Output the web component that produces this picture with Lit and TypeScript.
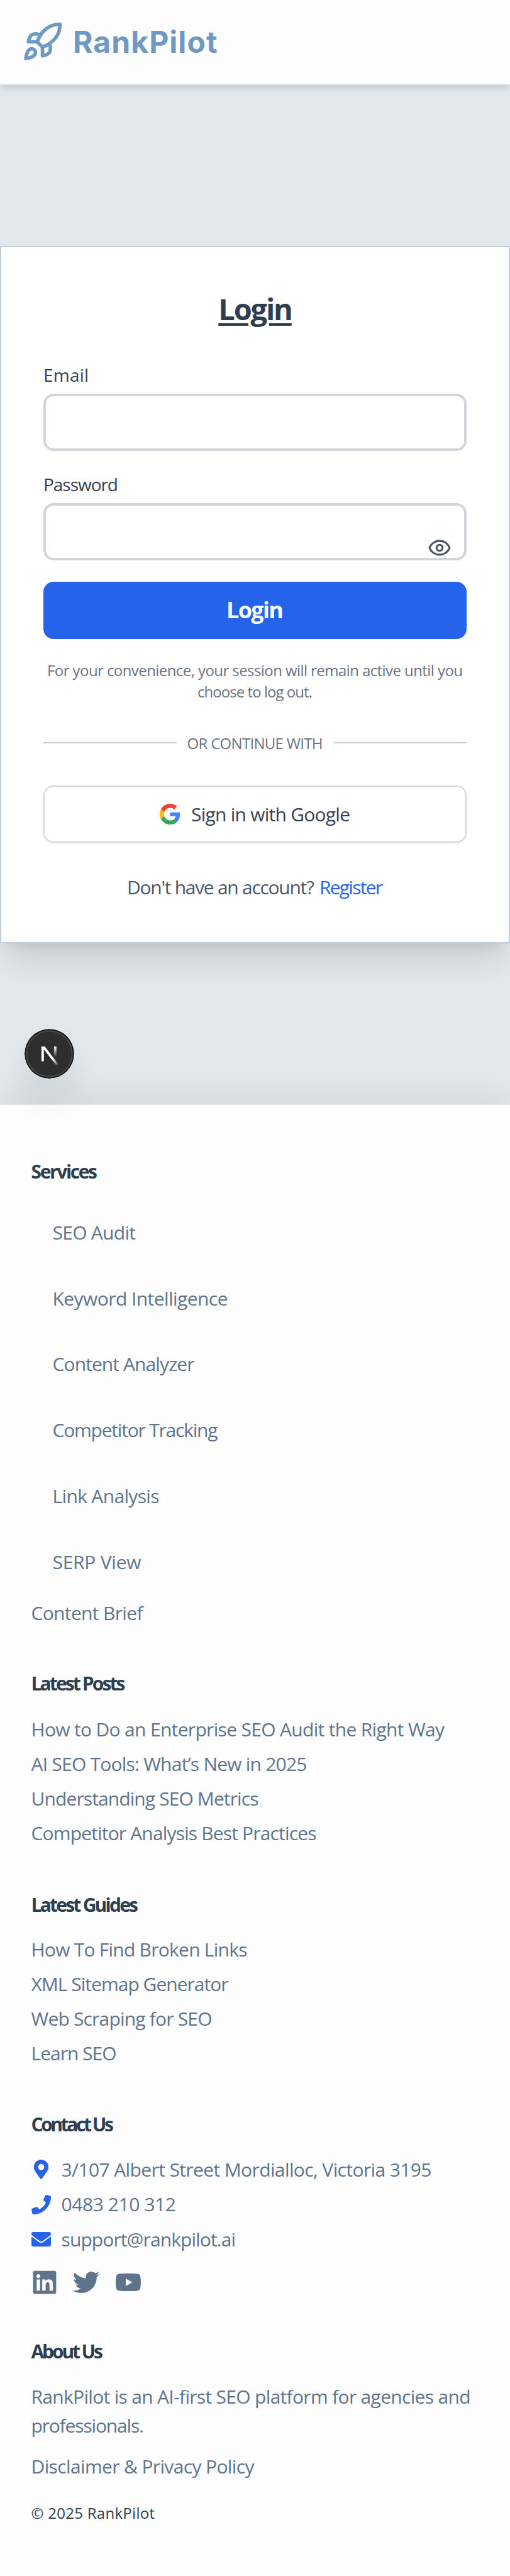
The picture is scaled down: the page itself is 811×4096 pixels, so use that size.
import { LitElement, html, css } from "lit";
import { customElement, property } from "lit/decorators.js";

/* A single line of text tracked out (or in) so that it runs to a set measure. */
@customElement("set-line")
class SetLine extends LitElement {
  @property({ type: String }) text = "";
  @property({ type: Number }) measure = 0;

  static styles = css`
    :host { display: inline-block; white-space: pre; }
    .run { display: inline-block; font-kerning: normal; }
  `;

  render() {
    return html`<span class="run">${this.text}</span>`;
  }

  updated() {
    const run = this.renderRoot.querySelector(".run") as HTMLElement;
    run.style.letterSpacing = "0px";
    const natural = run.getBoundingClientRect().width;
    const gaps = Math.max(1, this.text.length - 1);
    const tracking = (this.measure - natural) / gaps;
    run.style.letterSpacing = `${tracking.toFixed(3)}px`;
    run.style.marginRight = `${(-tracking).toFixed(3)}px`;
  }
}

type Entry = [string, number];
const line = ([text, measure]: Entry) =>
  html`<set-line .text=${text} .measure=${measure}></set-line>`;

const services: Entry[] = [
  ["SEO Audit", 132.5], ["Keyword Intelligence", 279], ["Content Analyzer", 226],
  ["Competitor Tracking", 263], ["Link Analysis", 170], ["SERP View", 141],
];
const posts: Entry[] = [
  ["How to Do an Enterprise SEO Audit the Right Way", 657.5],
  ["AI SEO Tools: What’s New in 2025", 439],
  ["Understanding SEO Metrics", 362],
  ["Competitor Analysis Best Practices", 454],
];
const guides: Entry[] = [
  ["How To Find Broken Links", 344], ["XML Sitemap Generator", 314],
  ["Web Scraping for SEO", 288], ["Learn SEO", 136],
];

@customElement("app-root")
class AppRoot extends LitElement {
  static styles = css`
    :host {
      display: flex; flex-direction: column; width: 811px; height: 4096px; overflow: hidden;
      font-family: "Open Sans", "Noto Sans", sans-serif;
      background: #e2e8ec; font-size: 30px; color: #5f748c;
    }
    * { box-sizing: border-box; }
    svg { display: block; flex: none; }
    .top {
      height: 135.3px; flex: none; background: #fdfdfd; border-bottom: 2.3px solid #e2e7ea;
      display: flex; align-items: center; padding-left: 33.5px; color: #6f99c3;
      box-shadow: 0 8px 12px -2px rgba(0,0,0,.1), 0 4px 8px -4px rgba(0,0,0,.1);
    }
    .rocket { width: 67px; height: 67px; }
    .brand { margin-left: 15.5px; font: 700 48px/60px "Inter", sans-serif; }
    .main { height: 1619.4px; flex: none; padding-top: 255.7px; }
    .card {
      height: 1109.5px; background: #fff; border: 2px solid #c2cdd9; padding: 67.6px 67px 0;
      display: flex; flex-direction: column;
      box-shadow: 0 40px 50px -10px rgba(0,0,0,.1), 0 16px 20px -12px rgba(0,0,0,.1);
    }
    .title {
      align-self: center; font-weight: 700; font-size: 47px; line-height: 60px; color: #2e3e50;
      text-decoration: underline; text-decoration-thickness: 4px; text-underline-offset: 5px;
      height: 60px; margin-bottom: 55px; letter-spacing: -2.2px;
    }
    .label { font-size: 28px; line-height: 40px; height: 40px; color: #374151; margin-bottom: 10.2px; }
    .field {
      height: 91.4px; border: 4px solid #d1d5db; border-radius: 16px; margin-bottom: 32.4px;
      display: flex; justify-content: flex-end; align-items: flex-end; padding: 0 20px 0 0; color: #4b5563;
    }
    .field.last { margin-bottom: 33.4px; }
    .eye { width: 38px; height: 38px; margin-bottom: -2.5px; }
    .submit {
      height: 91.7px; border-radius: 16px; background: #2563eb; color: #fff; font-weight: 700;
      font-size: 36px; display: flex; align-items: center; justify-content: center;
      line-height: 50px;
    }
    .note {
      margin-top: 33px; font-size: 24px; line-height: 33.6px; color: #6b7280;
      display: flex; flex-direction: column; align-items: center;
    }
    .note set-line { height: 33.6px; }
    .or { margin-top: 48.2px; height: 33.2px; display: flex; align-items: center; gap: 17px; font-size: 24px; line-height: 33.2px; color: #6b7280; }
    .rule { flex: 1; height: 2.2px; background: #c2cdd9; }
    .google {
      margin-top: 51.2px; height: 91.3px; border: 2px solid #d1d5db; border-radius: 16px;
      display: flex; align-items: center; justify-content: center; gap: 17px; color: #374151; line-height: 44px;
      box-shadow: 0 2px 4px rgba(0,0,0,.05);
    }
    .g { width: 33px; height: 33px; }
    .join { margin-top: 49px; height: 44px; line-height: 44px; display: flex; justify-content: center; gap: 8px; color: #4b5563; }
    .link { color: #2563eb; }
    .badge {
      position: absolute; left: 39.3px; top: 1635.6px; width: 79px; height: 79px; border-radius: 50%;
      box-shadow: 0 32px 64px -16px rgba(0,0,0,.24);
    }
    .foot {
      flex: 1; background: #fdfdfd; border-top: 2.3px solid #e2e6ea; padding: 84px 0 0 49.5px;
      box-shadow: 0 -16px 48px rgba(0,0,0,.065);
      display: flex; flex-direction: column; line-height: 44px;
    }
    .foot > * { flex: none; }
    .head { height: 44px; font-weight: 700; color: #2c3e50; }
    .services { margin-top: 23.1px; padding-left: 34px; line-height: 104.8px; }
    .row { display: flex; align-items: center; }
    .services .row { height: 104.8px; }
    .brief { margin-top: 6.4px; height: 44px; }
    .h-posts { margin-top: 68.5px; }
    .list { line-height: 55px; }
    .list .row { height: 55px; }
    .posts { margin-top: 22.9px; }
    .h-guides { margin-top: 64.5px; }
    .guides { margin-top: 21.2px; }
    .h-contact { margin-top: 64.1px; }
    .contact { margin-top: 22px; }
    .contact .row { height: 55.3px; gap: 17px; }
    .contact .phone set-line { line-height: 53px; height: 55px; }
    .ic { width: 31px; height: 31px; color: #2563eb; }
    .social { margin-top: 20px; height: 42px; display: flex; gap: 24.5px; }
    .social svg { height: 42px; width: 42px; }
    .h-about { margin-top: 67px; }
    .about { margin-top: 26.7px; line-height: 46.7px; display: flex; flex-direction: column; align-items: flex-start; }
    .about set-line { height: 46.7px; }
    .legal { margin-top: 18.6px; height: 44px; }
    .copy { margin-top: 33.9px; height: 36px; line-height: 36px; font-size: 24px; color: #2c3e50; }
  `;

  render() {
    return html`
      <header class="top">
        <svg class="rocket" viewBox="0 0 24 24" fill="none" stroke="currentColor" stroke-width="2" stroke-linecap="round" stroke-linejoin="round">
          <path d="M4.5 16.5c-1.5 1.26-2 5-2 5s3.74-.5 5-2c.71-.84.7-2.13-.09-2.91a2.18 2.18 0 0 0-2.91-.09z"/>
          <path d="m12 15-3-3a22 22 0 0 1 2-3.95A12.88 12.88 0 0 1 22 2c0 2.72-.78 7.5-6 11a22.35 22.35 0 0 1-4 2z"/>
          <path d="M9 12H4s.55-3.03 2-4c1.62-1.08 5 0 5 0"/>
          <path d="M12 15v5s3.03-.55 4-2c1.08-1.62 0-5 0-5"/>
        </svg>
        <div class="brand">${line(["RankPilot", 229.5])}</div>
      </header>

      <main class="main">
        <section class="card">
          <div class="title">Login</div>
          <div class="label">${line(["Email", 72])}</div>
          <div class="field"></div>
          <div class="label">${line(["Password", 119])}</div>
          <div class="field last">
            <svg class="eye" viewBox="0 0 24 24" fill="none" stroke="currentColor" stroke-width="2" stroke-linecap="round" stroke-linejoin="round">
              <path d="M2.062 12.348a1 1 0 0 1 0-.696 10.75 10.75 0 0 1 19.876 0 1 1 0 0 1 0 .696 10.75 10.75 0 0 1-19.876 0"/>
              <circle cx="12" cy="12" r="3"/>
            </svg>
          </div>
          <div class="submit">${line(["Login", 91])}</div>
          <div class="note">
            ${line(["For your convenience, your session will remain active until you", 661])}
            ${line(["choose to log out.", 183])}
          </div>
          <div class="or"><span class="rule"></span>${line(["OR CONTINUE WITH", 216])}<span class="rule"></span></div>
          <div class="google">
            <svg class="g" viewBox="0 0 48 48">
              <path fill="#EA4335" d="M24 9.5c3.54 0 6.71 1.22 9.21 3.6l6.85-6.85C35.9 2.38 30.47 0 24 0 14.62 0 6.51 5.38 2.56 13.22l7.98 6.19C12.43 13.72 17.74 9.5 24 9.5z"/>
              <path fill="#4285F4" d="M46.98 24.55c0-1.57-.15-3.09-.38-4.55H24v9.02h12.94c-.58 2.96-2.26 5.48-4.78 7.18l7.73 6c4.51-4.18 7.09-10.36 7.09-17.65z"/>
              <path fill="#FBBC05" d="M10.53 28.59c-.48-1.45-.76-2.99-.76-4.59s.27-3.14.76-4.59l-7.98-6.19C.92 16.46 0 20.12 0 24c0 3.88.92 7.54 2.56 10.78l7.97-6.19z"/>
              <path fill="#34A853" d="M24 48c6.48 0 11.93-2.13 15.89-5.81l-7.73-6c-2.15 1.45-4.92 2.3-8.16 2.3-6.26 0-11.57-4.22-13.47-9.91l-7.98 6.19C6.51 42.62 14.62 48 24 48z"/>
            </svg>
            ${line(["Sign in with Google", 253])}
          </div>
          <div class="join">${line(["Don't have an account?", 298])}<span class="link">${line(["Register", 101])}</span></div>
        </section>
      </main>

      <footer class="foot">
        <div class="head">${line(["Services", 105.5])}</div>
        <div class="services">${services.map((s) => html`<div class="row">${line(s)}</div>`)}</div>
        <div class="brief">${line(["Content Brief", 178])}</div>
        <div class="head h-posts">${line(["Latest Posts", 150])}</div>
        <div class="list posts">${posts.map((s) => html`<div class="row">${line(s)}</div>`)}</div>
        <div class="head h-guides">${line(["Latest Guides", 170.5])}</div>
        <div class="list guides">${guides.map((s) => html`<div class="row">${line(s)}</div>`)}</div>
        <div class="head h-contact">${line(["Contact Us", 131.5])}</div>
        <div class="list contact">
          <div class="row">
            <svg class="ic" viewBox="0 0 384 512" fill="currentColor"><path d="M172.268 501.67C26.97 291.031 0 269.413 0 192 0 85.961 85.961 0 192 0s192 85.961 192 192c0 77.413-26.97 99.031-172.268 309.67-9.535 13.774-29.93 13.773-39.464 0zM192 272c44.183 0 80-35.817 80-80s-35.817-80-80-80-80 35.817-80 80 35.817 80 80 80z"/></svg>
            ${line(["3/107 Albert Street Mordialloc, Victoria 3195", 589])}
          </div>
          <div class="row phone">
            <svg class="ic" viewBox="0 0 512 512" fill="currentColor"><path d="M493.4 24.6l-104-24c-11.3-2.6-22.9 3.3-27.5 13.9l-48 112c-4.2 9.8-1.4 21.3 6.9 28l60.6 49.6c-36 76.7-98.9 140.5-177.2 177.2l-49.6-60.6c-6.8-8.3-18.2-11.1-28-6.9l-112 48C3.9 366.5-2 378.1.6 389.4l24 104C27.1 504.2 36.7 512 48 512c256.1 0 464-207.5 464-464 0-11.2-7.7-20.9-18.6-23.4z"/></svg>
            ${line(["0483 210 312", 182.5])}
          </div>
          <div class="row">
            <svg class="ic" viewBox="0 0 512 512" fill="currentColor"><path d="M502.3 190.8c3.9-3.1 9.7-.2 9.7 4.7V400c0 26.5-21.5 48-48 48H48c-26.5 0-48-21.5-48-48V195.6c0-5 5.7-7.8 9.7-4.7 22.4 17.4 52.1 39.5 154.1 113.6 21.1 15.4 56.7 47.8 92.2 47.6 35.7.3 72-32.8 92.3-47.6 102-74.1 131.6-96.3 154-113.7zM256 320c23.2.4 56.6-29.2 73.4-41.4 132.7-96.3 142.8-104.7 173.4-128.7 5.8-4.5 9.2-11.5 9.2-18.9v-19c0-26.5-21.5-48-48-48H48c-26.5 0-48 21.5-48 48v19c0 7.4 3.4 14.3 9.2 18.9 30.6 23.9 40.7 32.4 173.4 128.7 16.8 12.2 50.2 41.8 73.4 41.4z"/></svg>
            ${line(["support@rankpilot.ai", 277.5])}
          </div>
        </div>
        <div class="social">
          <svg viewBox="0 0 448 512" fill="currentColor"><path d="M416 32H31.9C14.3 32 0 46.5 0 64.3v383.4C0 465.5 14.3 480 31.9 480H416c17.6 0 32-14.5 32-32.3V64.3c0-17.8-14.4-32.3-32-32.3zM135.4 416H69V202.2h66.5V416zm-33.2-243c-21.3 0-38.5-17.3-38.5-38.5S80.9 96 102.2 96c21.2 0 38.5 17.3 38.5 38.5 0 21.3-17.2 38.5-38.5 38.5zm282.1 243h-66.4V312c0-24.8-.5-56.7-34.5-56.7-34.6 0-39.9 27-39.9 54.9V416h-66.4V202.2h63.7v29.2h.9c8.9-16.8 30.6-34.5 62.9-34.5 67.2 0 79.7 44.3 79.7 101.9V416z"/></svg>
          <svg viewBox="0 0 512 512" fill="currentColor"><path d="M459.37 151.716c.325 4.548.325 9.097.325 13.645 0 138.72-105.583 298.558-298.558 298.558-59.452 0-114.68-17.219-161.137-47.106 8.447.974 16.568 1.299 25.34 1.299 49.055 0 94.213-16.568 130.274-44.832-46.132-.975-84.792-31.188-98.112-72.772 6.498.974 12.995 1.624 19.818 1.624 9.421 0 18.843-1.3 27.614-3.573-48.081-9.747-84.143-51.98-84.143-102.985v-1.299c13.969 7.797 30.214 12.67 47.431 13.319-28.264-18.843-46.781-51.005-46.781-87.391 0-19.492 5.197-37.36 14.294-52.954 51.655 63.675 129.3 105.258 216.365 109.807-1.624-7.797-2.599-15.918-2.599-24.04 0-57.828 46.782-104.934 104.934-104.934 30.213 0 57.502 12.67 76.67 33.137 23.715-4.548 46.456-13.32 66.599-25.34-7.798 24.366-24.366 44.833-46.132 57.827 21.117-2.273 41.584-8.122 60.426-16.243-14.292 20.791-32.161 39.308-52.628 54.253z"/></svg>
          <svg viewBox="0 0 576 512" fill="currentColor"><path d="M549.655 124.083c-6.281-23.65-24.787-42.276-48.284-48.597C458.781 64 288 64 288 64S117.22 64 74.629 75.486c-23.497 6.322-42.003 24.947-48.284 48.597-11.412 42.867-11.412 132.305-11.412 132.305s0 89.438 11.412 132.305c6.281 23.65 24.787 41.5 48.284 47.821C117.22 448 288 448 288 448s170.78 0 213.371-11.486c23.497-6.321 42.003-24.171 48.284-47.821 11.412-42.867 11.412-132.305 11.412-132.305s0-89.438-11.412-132.305zm-317.51 213.508V175.185l142.739 81.205-142.739 81.201z"/></svg>
        </div>
        <div class="head h-about">${line(["About Us", 114.5])}</div>
        <div class="about">
          ${line(["RankPilot is an AI-first SEO platform for agencies and", 699])}
          ${line(["professionals.", 179.5])}
        </div>
        <div class="legal">${line(["Disclaimer & Privacy Policy", 355])}</div>
        <div class="copy">${line(["© 2025 RankPilot", 196.5])}</div>
      </footer>

      <svg class="badge" viewBox="0 0 79 79">
        <defs>
          <linearGradient id="slant" gradientUnits="userSpaceOnUse" x1="9.956" y1="11.123" x2="14.2" y2="16.3">
            <stop stop-color="#fff"/><stop offset="1" stop-color="#fff" stop-opacity="0"/>
          </linearGradient>
          <linearGradient id="stem" gradientUnits="userSpaceOnUse" x1="11.82" y1="1.4" x2="11.79" y2="9.6">
            <stop stop-color="#fff"/><stop offset="1" stop-color="#fff" stop-opacity="0"/>
          </linearGradient>
          <clipPath id="cut"><rect x="0" y="1.5" width="20" height="16"/></clipPath>
        </defs>
        <circle cx="39.5" cy="39.5" r="39.5" fill="#161616"/>
        <circle cx="39.5" cy="39.5" r="37.3" fill="#4b4b4c"/>
        <circle cx="39.5" cy="39.5" r="35.2" fill="#2d2e2e"/>
        <g transform="translate(23.9 24.8) scale(2.11)" fill="none" stroke-width="1.86">
          <path clip-path="url(#cut)" d="M13.3 15.2 L2.34 1 V12.6" stroke="url(#slant)"/>
          <path d="M11.825 1.5 V13.1" stroke="url(#stem)"/>
        </g>
      </svg>
    `;
  }
}
